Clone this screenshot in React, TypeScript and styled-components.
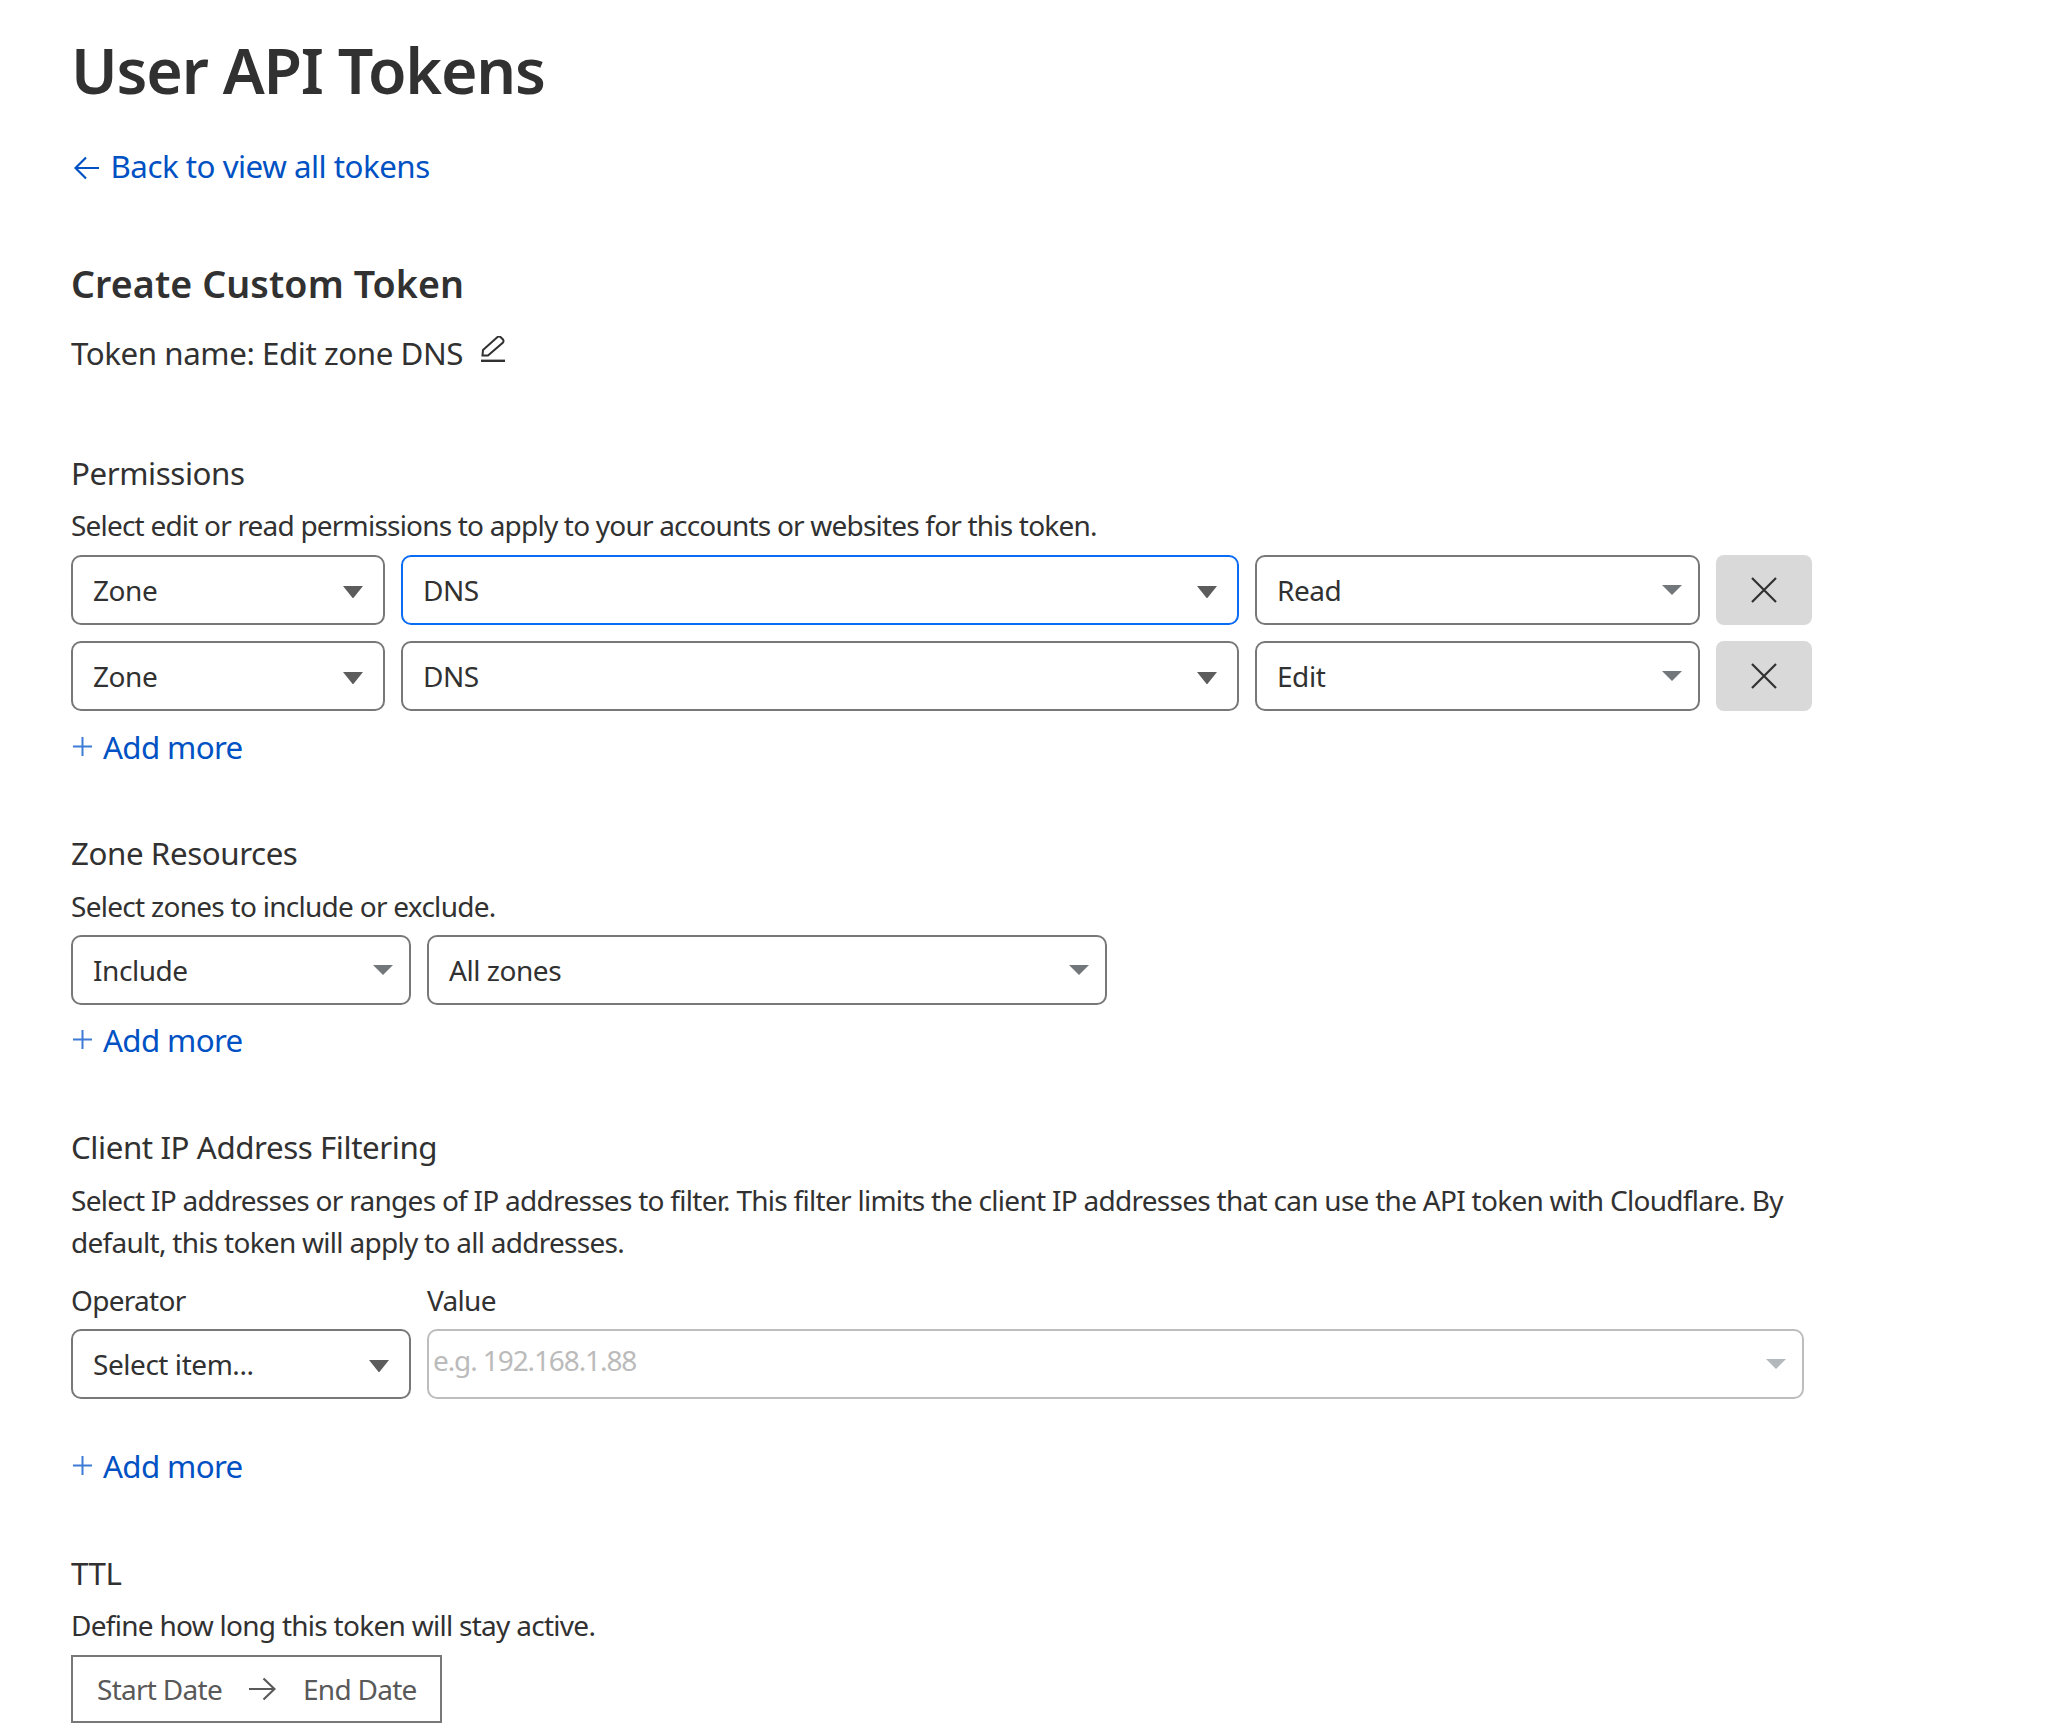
import React from "react"
import styled, { createGlobalStyle } from "styled-components"

const GlobalStyle = createGlobalStyle`
  html, body {
    margin: 0;
    background: #fff;
  }
  body {
    font-family: "Noto Sans", "Open Sans", sans-serif;
    color: #313131;
  }
`

const Page = styled.main`
  box-sizing: border-box;
  width: 2047px;
  height: 1735px;
  overflow: hidden;
  padding: 30px 0 0 71px;
`

const Title = styled.h1`
  margin: 0 0 35px;
  font-size: 62.6px;
  line-height: 80px;
  font-weight: 600;
  letter-spacing: -1.2px;
`

const Subtitle = styled.h2`
  margin: 72px 0 23px;
  font-size: 37.6px;
  line-height: 50px;
  font-weight: 600;
  letter-spacing: 0.1px;
`

const SectionTitle = styled.h3<{ $gap: number; $below?: number }>`
  margin: ${(p) => p.$gap}px 0 ${(p) => p.$below ?? 10.5}px;
  font-size: 31.3px;
  line-height: 42px;
  font-weight: 400;
  letter-spacing: -0.42px;
`

const Text = styled.p<{ $tight?: boolean }>`
  margin: 0;
  width: 1740px;
  font-size: 28px;
  line-height: 42px;
  letter-spacing: ${(p) => (p.$tight ? -0.8 : -0.72)}px;
`

const TokenName = styled.div`
  display: flex;
  align-items: center;
  gap: 18px;
  font-size: 31.3px;
  line-height: 42px;
  letter-spacing: -0.44px;

  svg {
    margin-bottom: 9px;
  }
`

const LinkRow = styled.a<{ $gap?: number; $spacing: number }>`
  display: flex;
  align-items: center;
  margin-top: ${(p) => p.$gap ?? 0}px;
  color: #0051c3;
  font-size: 31.3px;
  line-height: 42px;
  letter-spacing: ${(p) => p.$spacing}px;
  text-decoration: none;
`

const IconSlot = styled.span<{ $w: number; $inset: number; $shift: number }>`
  display: inline-flex;
  flex: 0 0 ${(p) => p.$w}px;
  box-sizing: border-box;
  width: ${(p) => p.$w}px;
  margin-top: ${(p) => p.$shift}px;
  padding-left: ${(p) => p.$inset}px;
`

const Row = styled.div<{ $top: number }>`
  display: flex;
  gap: 16px;
  margin-top: ${(p) => p.$top}px;
`

const SelectBox = styled.div<{ $w: number; $focused?: boolean; $muted?: boolean }>`
  box-sizing: border-box;
  display: flex;
  align-items: center;
  justify-content: space-between;
  flex: 0 0 ${(p) => p.$w}px;
  width: ${(p) => p.$w}px;
  height: 70px;
  padding: 0 16px 0 ${(p) => (p.$muted ? 4 : 20)}px;
  border: 2.6px solid ${(p) => (p.$focused ? "#0a6cf5" : p.$muted ? "#bdbdbd" : "#787878")};
  border-radius: 10px;
  font-size: 28px;
  color: ${(p) => (p.$muted ? "#bbbbbb" : "#313131")};
`

const SelectValue = styled.span`
  margin-top: -1px;
  letter-spacing: -0.45px;
`

const PlaceholderText = styled.span`
  margin-top: -9px;
  letter-spacing: -1.1px;
`

const Caret = styled.svg<{ $dark?: boolean }>`
  flex: none;
  width: 20px;
  height: ${(p) => (p.$dark ? 12.5 : 10)}px;
  margin: ${(p) => (p.$dark ? "4px 4px 0 0" : "0")};
`

const RemoveButton = styled.button`
  display: flex;
  align-items: center;
  justify-content: center;
  flex: 0 0 96px;
  height: 70px;
  padding: 0;
  border: 0;
  border-radius: 8px;
  background: #d9d9d9;
  color: #313131;
`

const FieldLabels = styled.div`
  display: flex;
  gap: 16px;
  margin: 16px 0 8px;
  font-size: 28px;
  line-height: 42px;
  letter-spacing: -0.7px;
`

const FieldLabel = styled.span<{ $w: number }>`
  flex: 0 0 ${(p) => p.$w}px;
`

const DateRange = styled.div`
  box-sizing: border-box;
  display: flex;
  align-items: center;
  width: 371px;
  height: 68px;
  margin-top: 9px;
  padding-left: 24px;
  border: 2.4px solid #787878;
  font-size: 28px;
  letter-spacing: -0.72px;
  color: #595959;
`

const DateArrow = styled.svg`
  flex: none;
  width: 27px;
  height: 24px;
  margin: 0 27px;
`

const Select = ({ w, value, focused, dark }: { w: number; value: string; focused?: boolean; dark?: boolean }) => (
  <SelectBox $w={w} $focused={focused}>
    <SelectValue>{value}</SelectValue>
    <Caret $dark={dark} viewBox="0 0 20 12" preserveAspectRatio="none">
      <path d="M0 0h20L10 12z" fill={dark ? "#5c5c5c" : "#72777b"} />
    </Caret>
  </SelectBox>
)

const Cross = () => (
  <svg width="26" height="26" viewBox="0 0 26 26" fill="none" stroke="currentColor" strokeWidth="2.2">
    <path d="M1 1l24 24M25 1L1 25" />
  </svg>
)

const AddMore = ({ top }: { top: number }) => (
  <LinkRow href="#" $gap={top} $spacing={-0.65}>
    <IconSlot $w={32} $inset={2} $shift={-2}>
      <svg width="19" height="19" viewBox="0 0 19 19" fill="none" stroke="#3d7bd6" strokeWidth="2">
        <path d="M9.500 0v19M0 9.500h19" />
      </svg>
    </IconSlot>
    Add more
  </LinkRow>
)

export default function App() {
  return (
    <Page>
      <GlobalStyle />
      <Title>User API Tokens</Title>
      <LinkRow href="#" $spacing={-0.5}>
        <IconSlot $w={39.500} $inset={3} $shift={3}>
          <svg width="25" height="24" viewBox="0 0 25 24" fill="none" stroke="#0051c3" strokeWidth="2.2">
            <path d="M25 12H2M12 1.500L1.500 12 12 22.500" />
          </svg>
        </IconSlot>
        Back to view all tokens
      </LinkRow>

      <Subtitle>Create Custom Token</Subtitle>
      <TokenName>
        Token name: Edit zone DNS
        <svg width="24" height="26" viewBox="0 0 24 26" fill="none" stroke="#313131" strokeWidth="2">
          <path d="M1.500 19.500L2 14 16.500 1Q18 0 19.500 1L22 3.500Q23 5 22 6.500L7 19.500z" />
          <path d="M0 24.800h24" strokeWidth="2.400" />
        </svg>
      </TokenName>

      <SectionTitle $gap={77.5}>Permissions</SectionTitle>
      <Text $tight>Select edit or read permissions to apply to your accounts or websites for this token.</Text>
      <Row $top={9}>
        <Select w={314} value="Zone" dark />
        <Select w={838} value="DNS" focused dark />
        <Select w={445} value="Read" />
        <RemoveButton aria-label="Remove">
          <Cross />
        </RemoveButton>
      </Row>
      <Row $top={16}>
        <Select w={314} value="Zone" dark />
        <Select w={838} value="DNS" dark />
        <Select w={445} value="Edit" />
        <RemoveButton aria-label="Remove">
          <Cross />
        </RemoveButton>
      </Row>
      <AddMore top={15} />

      <SectionTitle $gap={64} $below={11}>Zone Resources</SectionTitle>
      <Text>Select zones to include or exclude.</Text>
      <Row $top={8}>
        <Select w={340} value="Include" />
        <Select w={680} value="All zones" />
      </Row>
      <AddMore top={14} />

      <SectionTitle $gap={65} $below={11}>Client IP Address Filtering</SectionTitle>
      <Text>
        Select IP addresses or ranges of IP addresses to filter. This filter limits the client IP addresses that can
        use the API token with Cloudflare. By default, this token will apply to all addresses.
      </Text>
      <FieldLabels>
        <FieldLabel $w={340}>Operator</FieldLabel>
        <FieldLabel $w={200}>Value</FieldLabel>
      </FieldLabels>
      <Row $top={0}>
        <Select w={340} value="Select item..." dark />
        <SelectBox $w={1377} $muted>
          <PlaceholderText>e.g. 192.168.1.88</PlaceholderText>
          <Caret viewBox="0 0 20 12" preserveAspectRatio="none">
            <path d="M0 0h20L10 12z" fill="#b3b8bc" />
          </Caret>
        </SelectBox>
      </Row>
      <AddMore top={46} />

      <SectionTitle $gap={64.5}>TTL</SectionTitle>
      <Text>Define how long this token will stay active.</Text>
      <DateRange>
        Start Date
        <DateArrow viewBox="0 0 27 24" fill="none" stroke="#595959" strokeWidth="2.2">
          <path d="M0 12h25M14.500 1.500L25.500 12 14.500 22.500" />
        </DateArrow>
        End Date
      </DateRange>
    </Page>
  )
}
